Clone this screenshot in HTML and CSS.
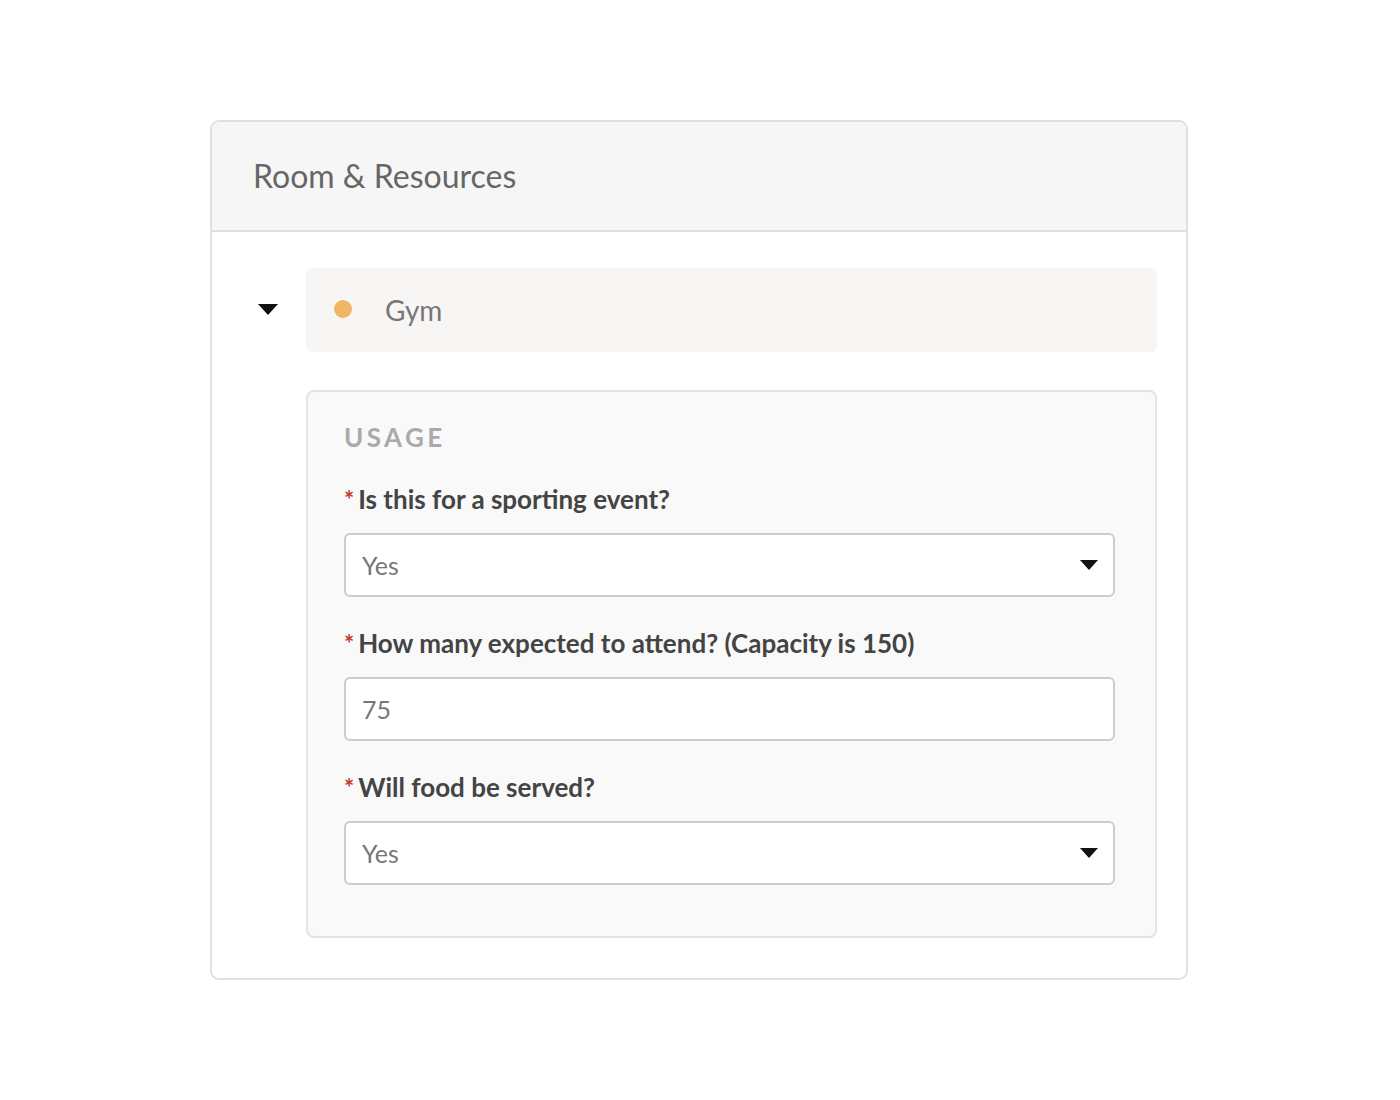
FILE: index.html
```html
<!DOCTYPE html>
<html>
<head>
<meta charset="utf-8">
<link rel="stylesheet" href="styles.css">
</head>
<body>
<div class="card">
  <div class="card-header">Room &amp; Resources</div>
  <div class="card-body">
    <div class="resource-row">
      <div class="toggle"><span class="caret"></span></div>
      <div class="resource-title"><span class="dot"></span><span class="name">Gym</span></div>
    </div>
    <div class="usage">
      <div class="usage-title">USAGE</div>
      <div class="field">
        <div class="label"><span class="req">*</span>Is this for a sporting event?</div>
        <div class="control select"><span class="value">Yes</span><span class="arrow"></span></div>
      </div>
      <div class="field">
        <div class="label"><span class="req">*</span>How many expected to attend? (Capacity is 150)</div>
        <div class="control"><span class="value">75</span></div>
      </div>
      <div class="field">
        <div class="label"><span class="req">*</span>Will food be served?</div>
        <div class="control select"><span class="value">Yes</span><span class="arrow"></span></div>
      </div>
    </div>
  </div>
</div>
</body>
</html>
```

FILE: styles.css
```css
* { box-sizing: border-box; }
body {
  margin: 0;
  background: #fff;
  font-family: Lato, "Open Sans", sans-serif;
}
.card {
  margin: 120px 0 0 210px;
  width: 978px;
  border: 2px solid #e0e0e0;
  border-radius: 9px;
  overflow: hidden;
}
.card-header {
  height: 110px;
  background: #f6f6f6;
  border-bottom: 2px solid #e0e0e0;
  padding-left: 41px;
  display: flex;
  align-items: center;
  padding-bottom: 2px;
  font-size: 32px;
  color: #666;
}
.card-body {
  padding: 36px 29px 40px 46px;
}
.resource-row {
  display: flex;
  align-items: center;
}
.toggle {
  width: 48px;
  display: flex;
  align-items: center;
}
.caret {
  width: 0; height: 0;
  border-left: 10px solid transparent;
  border-right: 10px solid transparent;
  border-top: 11px solid #111;
  margin-top: -2px;
}
.resource-title {
  flex: 1;
  height: 84px;
  background: #f7f6f5;
  border-radius: 6px;
  display: flex;
  align-items: center;
  padding-left: 28px;
}
.dot {
  width: 18px; height: 18px;
  border-radius: 50%;
  background: #f0b565;
  margin-right: 33px;
  margin-top: -2px;
}
.name {
  font-size: 28px;
  color: #777;
}
.usage {
  margin: 38px 0 0 48px;
  background: #f9f9f9;
  border: 2px solid #e4e4e4;
  border-radius: 8px;
  padding: 28px 40px 51px 36px;
}
.usage-title {
  font-size: 26px;
  font-weight: 700;
  letter-spacing: 3.4px;
  color: #aaa;
  line-height: 34px;
  margin-bottom: 29px;
}
.field + .field { margin-top: 30px; }
.label {
  font-size: 26px;
  font-weight: 700;
  color: #444;
  line-height: 32px;
  margin-bottom: 17px;
}
.req {
  color: #c0392b;
  font-size: 24px;
  margin-right: 4px;
}
.control {
  height: 64px;
  background: #fff;
  border: 2px solid #cccccc;
  border-radius: 6px;
  display: flex;
  align-items: center;
  padding: 0 15px 0 16px;
}
.value {
  flex: 1;
  font-size: 25px;
  color: #777;
}
.arrow {
  width: 0; height: 0;
  border-left: 9px solid transparent;
  border-right: 9px solid transparent;
  border-top: 10px solid #111;
}
```
